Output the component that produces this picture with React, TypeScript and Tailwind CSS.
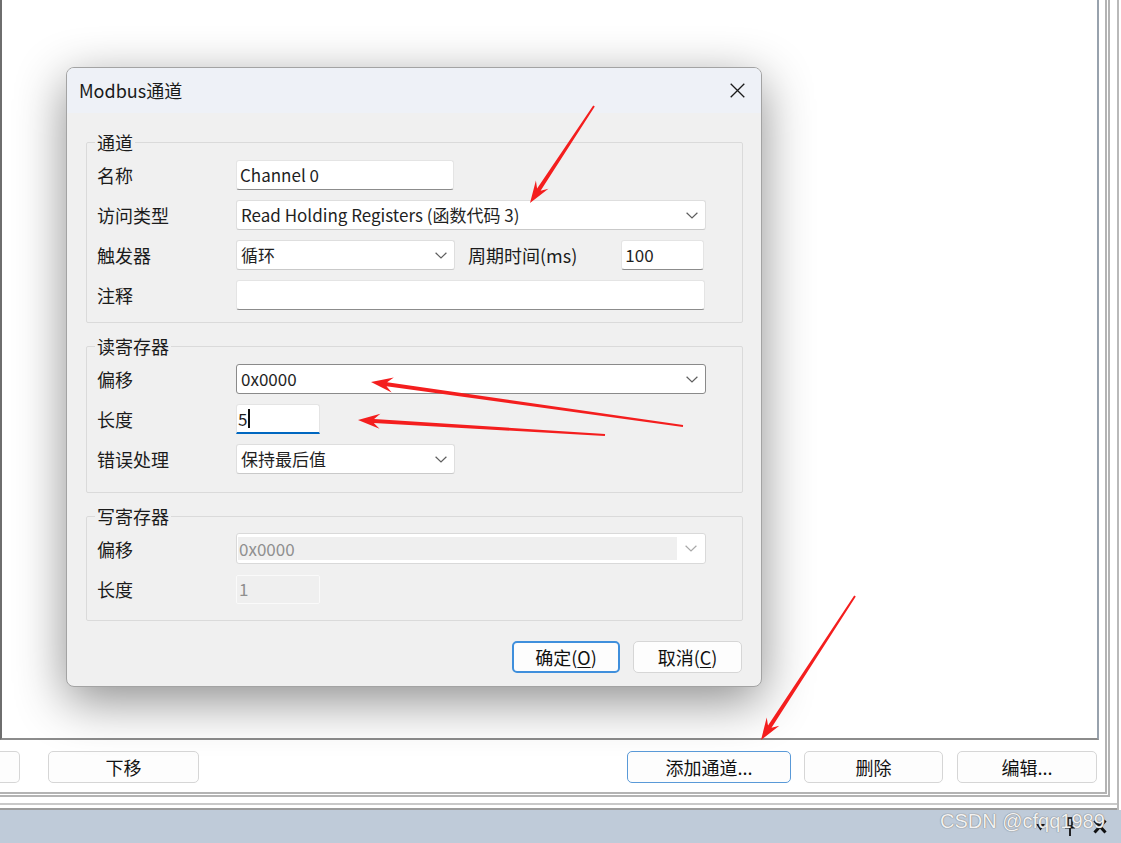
import React from 'react';

const font = "font-['Noto_Sans_CJK_SC',sans-serif]";

const Chevron = ({ color = '#5f5f5f' }: { color?: string }) => (
  <svg width="12" height="7" viewBox="0 0 12 7" fill="none">
    <path d="M0.6 0.8 6 6 11.4 0.8" stroke={color} strokeWidth="1.2" />
  </svg>
);

const Row = ({ label, children, h = 'h-[30px]' }: { label: string; children: React.ReactNode; h?: string }) => (
  <div className={`flex items-center ${h}`}>
    <div className="w-[139px] text-[18px] leading-none text-[#1b1b1b]">{label}</div>
    {children}
  </div>
);

const Group = ({ title, className, children }: { title: string; className: string; children: React.ReactNode }) => (
  <div className={`relative w-[657px] rounded-[2px] border border-[#dadada] pl-[10px] ${className}`}>
    <span className="absolute -top-[13px] left-[8px] bg-[#f0f0f0] px-[2px] text-[18px] leading-[24px] text-[#1b1b1b]">
      {title}
    </span>
    <div className="flex flex-col gap-[10px]">{children}</div>
  </div>
);

const TextBox = ({ w, value = '' }: { w: string; value?: string }) => (
  <div className={`flex h-[30px] items-center rounded-[3px] border border-[#e4e4e4] border-b-[#8c8c8c] bg-white pl-[3px] text-[17px] text-[#1f1f1f] ${w}`}>
    {value}
  </div>
);

const Combo = ({ w, value, border = 'border-[#dedede] border-b-[#c9c9c9]' }: { w: string; value: string; border?: string }) => (
  <div className={`flex h-[30px] items-center justify-between rounded-[3px] border bg-white pl-[4px] pr-[7px] text-[17px] text-[#1f1f1f] ${border} ${w}`}>
    <span>{value}</span>
    <Chevron />
  </div>
);

const PageButton = ({ w, label, focused = false, ml }: { w: string; label: string; focused?: boolean; ml: string }) => (
  <div
    className={`flex h-[32px] items-center justify-center rounded-[5px] border bg-[#fdfdfd] text-[18px] text-[#111] ${
      focused ? 'border-[#5a9ad8]' : 'border-[#d6d6d6]'
    } ${w} ${ml}`}>
    {label}
  </div>
);

const arrows = [
  [594, 106, 530, 203],
  [683, 426, 371, 382],
  [605, 435, 358, 420],
  [855, 596, 761, 740]
];

function arrowPoints([x1, y1, x2, y2]: number[]) {
  const len = Math.hypot(x2 - x1, y2 - y1);
  const ux = (x2 - x1) / len;
  const uy = (y2 - y1) / len;
  const nx = -uy;
  const ny = ux;
  const p = (x: number, y: number) => `${x.toFixed(1)},${y.toFixed(1)}`;
  const L = 22;
  const W = 7.5;
  const notch = 16;
  const bw = 2.1;
  const tw = 0.9;
  const bx = x2 - ux * notch;
  const by = y2 - uy * notch;
  const hx = x2 - ux * L;
  const hy = y2 - uy * L;
  return [
    p(x1 + nx * tw, y1 + ny * tw),
    p(bx + nx * bw, by + ny * bw),
    p(hx + nx * W, hy + ny * W),
    p(x2, y2),
    p(hx - nx * W, hy - ny * W),
    p(bx - nx * bw, by - ny * bw),
    p(x1 - nx * tw, y1 - ny * tw)
  ].join(' ');
}

export default function App() {
  return (
    <div className={`relative h-[843px] w-[1121px] overflow-hidden bg-white ${font}`}>
      {/* background window */}
      <div className="flex h-[810px] w-[1119px] flex-col border-r-2 border-[#b9b9b9]">
        <div className="flex h-[797px] w-[1110px] flex-col border-r-[5px] border-b-[5px] border-double border-[#b3b3b3]">
          <div className="h-[740px] w-[1099px] border-b-2 border-l-2 border-r-2 border-[#8c8c8c] border-l-[#6e6e6e] border-r-[#98a2ad]" />
          <div className="flex items-start pt-[11px]">
            <div className="h-[32px] w-[20px] rounded-r-[5px] border border-l-0 border-[#d6d6d6] bg-[#fdfdfd]" />
            <PageButton w="w-[151px]" ml="ml-[28px]" label="下移" />
            <PageButton w="w-[164px]" ml="ml-[428px]" label="添加通道..." focused />
            <PageButton w="w-[139px]" ml="ml-[13px]" label="删除" />
            <PageButton w="w-[140px]" ml="ml-[14px]" label="编辑..." />
          </div>
        </div>
        <div className="mt-[6px] h-[2px] bg-[#c9c9c9]" />
        <div className="mt-[3px] h-[2px] bg-[#9c9c9c]" />
      </div>
      <div className="flex h-[33px] items-center justify-end bg-[#bfcbd9] pr-[14px]">
        <svg width="9" height="8" viewBox="0 0 9 8">
          <path d="M0 1h9L4.5 7.5z" fill="#111" />
        </svg>
        <svg className="ml-[20px]" width="10" height="20" viewBox="0 0 10 20">
          <rect x="3" y="1" width="4" height="8" fill="none" stroke="#111" strokeWidth="1.6" />
          <path d="M0 10.5h10M5 11v8" stroke="#111" strokeWidth="1.8" />
        </svg>
        <svg className="ml-[18px]" width="14" height="15" viewBox="0 0 14 15">
          <path d="M1.5 1.5 12.5 13.5M12.5 1.5 1.5 13.5" stroke="#111" strokeWidth="3" />
        </svg>
      </div>
      <div className="absolute left-[940px] top-[809px] font-['Liberation_Sans',sans-serif] text-[20px] leading-[24px] text-white/90 [text-shadow:0_0_1px_#777,0_0_1px_#777]">
        CSDN @cfqq1989
      </div>

      {/* dialog */}
      <div className="absolute left-[66px] top-[67px] flex h-[620px] w-[696px] flex-col overflow-hidden rounded-[8px] border border-[#a3a3a3] bg-[#f0f0f0] shadow-[0_14px_50px_rgba(0,0,0,0.45)]">
        <div className="flex h-[45px] shrink-0 items-center justify-between bg-[#eef1f7] pl-[12px] pr-[16px]">
          <span className="text-[18px] text-[#1a1a1a]">Modbus通道</span>
          <svg width="15" height="15" viewBox="0 0 15 15">
            <path d="M0.7 0.7 14.3 14.3M14.3 0.7 0.7 14.3" stroke="#1a1a1a" strokeWidth="1.3" />
          </svg>
        </div>

        <div className="ml-[19px] mt-[29px] flex flex-col">
          <Group title="通道" className="pb-[12px] pt-[17px]">
            <Row label="名称">
              <TextBox w="w-[218px]" value="Channel 0" />
            </Row>
            <Row label="访问类型">
              <Combo w="w-[470px]" value="Read Holding Registers (函数代码 3)" />
            </Row>
            <Row label="触发器">
              <Combo w="w-[219px]" value="循环" />
              <span className="ml-[13px] text-[18px] text-[#1b1b1b]">周期时间(ms)</span>
              <div className="ml-[44px]">
                <TextBox w="w-[83px]" value="100" />
              </div>
            </Row>
            <Row label="注释">
              <TextBox w="w-[469px]" />
            </Row>
          </Group>

          <Group title="读寄存器" className="mt-[23px] pb-[18px] pt-[17px]">
            <Row label="偏移">
              <Combo w="w-[470px]" value="0x0000" border="border-[#8a8a8a]" />
            </Row>
            <Row label="长度">
              <div className="flex h-[30px] w-[84px] items-center rounded-t-[3px] border border-b-2 border-[#e4e4e4] border-b-[#0067c0] bg-white pl-[1px] text-[17px] text-[#1f1f1f]">
                5<span className="ml-[1px] h-[19px] w-[2px] bg-[#111]" />
              </div>
            </Row>
            <Row label="错误处理">
              <Combo w="w-[219px]" value="保持最后值" />
            </Row>
          </Group>

          <Group title="写寄存器" className="mt-[23px] pb-[16px] pt-[16px]">
            <Row label="偏移" h="h-[31px]">
              <div className="flex h-[31px] w-[470px] rounded-[3px] border border-[#d9d9d9] bg-white py-[3px] pl-[1px]">
                <div className="flex flex-1 items-center bg-[#efefef] pl-[1px] text-[17px] text-[#8f8f8f]">0x0000</div>
                <div className="flex w-[28px] items-center justify-center">
                  <Chevron color="#a9a9a9" />
                </div>
              </div>
            </Row>
            <Row label="长度">
              <div className="flex h-[29px] w-[84px] items-center rounded-[2px] border border-[#fafafa] bg-[#efefef] pl-[2px] text-[17px] text-[#8f8f8f]">
                1
              </div>
            </Row>
          </Group>
        </div>

        <div className="mt-[20px] flex justify-end gap-[13px] pr-[19px]">
          <div className="flex h-[32px] w-[108px] items-center justify-center rounded-[5px] border-2 border-[#3f8fdc] bg-[#fdfdfd] text-[18px] text-[#111]">
            确定(<span className="underline underline-offset-2">O</span>)
          </div>
          <div className="flex h-[32px] w-[109px] items-center justify-center rounded-[5px] border border-[#d6d6d6] bg-[#fdfdfd] text-[18px] text-[#111]">
            取消(<span className="underline underline-offset-2">C</span>)
          </div>
        </div>
      </div>

      {/* red annotation arrows */}
      <svg className="pointer-events-none absolute left-0 top-0" width="1121" height="843">
        {arrows.map((a, i) => (
          <polygon key={i} points={arrowPoints(a)} fill="#f41e1e" />
        ))}
      </svg>
    </div>
  );
}
